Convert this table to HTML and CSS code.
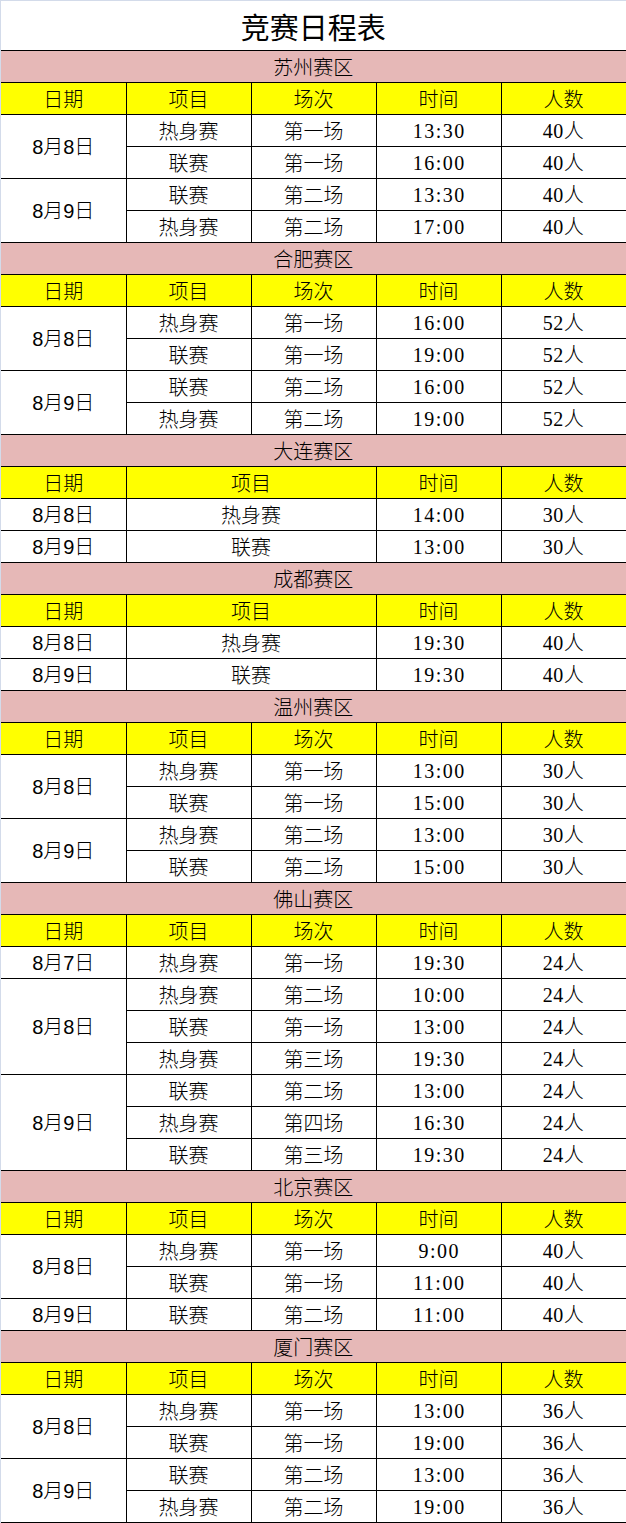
FILE: index.html
```html
<!DOCTYPE html>
<html lang="zh-CN">
<head>
<meta charset="utf-8">
<title>竞赛日程表</title>
<link rel="stylesheet" href="styles.css">
</head>
<body>
<div class="sheet">
<table class="schedule">
<colgroup><col class="c"><col class="c"><col class="c"><col class="c"><col class="c"></colgroup>
<tbody>
<tr><td class="title" colspan="5">竞赛日程表</td></tr>

<tr><td class="zone" colspan="5">苏州赛区</td></tr>
<tr class="head"><td>日期</td><td>项目</td><td>场次</td><td>时间</td><td>人数</td></tr>
<tr><td class="date" rowspan="2">8月8日</td><td>热身赛</td><td>第一场</td><td class="time">13:30</td><td class="num">40人</td></tr>
<tr><td>联赛</td><td>第一场</td><td class="time">16:00</td><td class="num">40人</td></tr>
<tr><td class="date" rowspan="2">8月9日</td><td>联赛</td><td>第二场</td><td class="time">13:30</td><td class="num">40人</td></tr>
<tr><td>热身赛</td><td>第二场</td><td class="time">17:00</td><td class="num">40人</td></tr>

<tr><td class="zone" colspan="5">合肥赛区</td></tr>
<tr class="head"><td>日期</td><td>项目</td><td>场次</td><td>时间</td><td>人数</td></tr>
<tr><td class="date" rowspan="2">8月8日</td><td>热身赛</td><td>第一场</td><td class="time">16:00</td><td class="num">52人</td></tr>
<tr><td>联赛</td><td>第一场</td><td class="time">19:00</td><td class="num">52人</td></tr>
<tr><td class="date" rowspan="2">8月9日</td><td>联赛</td><td>第二场</td><td class="time">16:00</td><td class="num">52人</td></tr>
<tr><td>热身赛</td><td>第二场</td><td class="time">19:00</td><td class="num">52人</td></tr>

<tr><td class="zone" colspan="5">大连赛区</td></tr>
<tr class="head"><td>日期</td><td colspan="2">项目</td><td>时间</td><td>人数</td></tr>
<tr><td class="date">8月8日</td><td colspan="2">热身赛</td><td class="time">14:00</td><td class="num">30人</td></tr>
<tr><td class="date">8月9日</td><td colspan="2">联赛</td><td class="time">13:00</td><td class="num">30人</td></tr>

<tr><td class="zone" colspan="5">成都赛区</td></tr>
<tr class="head"><td>日期</td><td colspan="2">项目</td><td>时间</td><td>人数</td></tr>
<tr><td class="date">8月8日</td><td colspan="2">热身赛</td><td class="time">19:30</td><td class="num">40人</td></tr>
<tr><td class="date">8月9日</td><td colspan="2">联赛</td><td class="time">19:30</td><td class="num">40人</td></tr>

<tr><td class="zone" colspan="5">温州赛区</td></tr>
<tr class="head"><td>日期</td><td>项目</td><td>场次</td><td>时间</td><td>人数</td></tr>
<tr><td class="date" rowspan="2">8月8日</td><td>热身赛</td><td>第一场</td><td class="time">13:00</td><td class="num">30人</td></tr>
<tr><td>联赛</td><td>第一场</td><td class="time">15:00</td><td class="num">30人</td></tr>
<tr><td class="date" rowspan="2">8月9日</td><td>热身赛</td><td>第二场</td><td class="time">13:00</td><td class="num">30人</td></tr>
<tr><td>联赛</td><td>第二场</td><td class="time">15:00</td><td class="num">30人</td></tr>

<tr><td class="zone" colspan="5">佛山赛区</td></tr>
<tr class="head"><td>日期</td><td>项目</td><td>场次</td><td>时间</td><td>人数</td></tr>
<tr><td class="date">8月7日</td><td>热身赛</td><td>第一场</td><td class="time">19:30</td><td class="num">24人</td></tr>
<tr><td class="date" rowspan="3">8月8日</td><td>热身赛</td><td>第二场</td><td class="time">10:00</td><td class="num">24人</td></tr>
<tr><td>联赛</td><td>第一场</td><td class="time">13:00</td><td class="num">24人</td></tr>
<tr><td>热身赛</td><td>第三场</td><td class="time">19:30</td><td class="num">24人</td></tr>
<tr><td class="date" rowspan="3">8月9日</td><td>联赛</td><td>第二场</td><td class="time">13:00</td><td class="num">24人</td></tr>
<tr><td>热身赛</td><td>第四场</td><td class="time">16:30</td><td class="num">24人</td></tr>
<tr><td>联赛</td><td>第三场</td><td class="time">19:30</td><td class="num">24人</td></tr>

<tr><td class="zone" colspan="5">北京赛区</td></tr>
<tr class="head"><td>日期</td><td>项目</td><td>场次</td><td>时间</td><td>人数</td></tr>
<tr><td class="date" rowspan="2">8月8日</td><td>热身赛</td><td>第一场</td><td class="time">9:00</td><td class="num">40人</td></tr>
<tr><td>联赛</td><td>第一场</td><td class="time">11:00</td><td class="num">40人</td></tr>
<tr><td class="date">8月9日</td><td>联赛</td><td>第二场</td><td class="time">11:00</td><td class="num">40人</td></tr>

<tr><td class="zone" colspan="5">厦门赛区</td></tr>
<tr class="head"><td>日期</td><td>项目</td><td>场次</td><td>时间</td><td>人数</td></tr>
<tr><td class="date" rowspan="2">8月8日</td><td>热身赛</td><td>第一场</td><td class="time">13:00</td><td class="num">36人</td></tr>
<tr><td>联赛</td><td>第一场</td><td class="time">19:00</td><td class="num">36人</td></tr>
<tr><td class="date" rowspan="2">8月9日</td><td>联赛</td><td>第二场</td><td class="time">13:00</td><td class="num">36人</td></tr>
<tr><td>热身赛</td><td>第二场</td><td class="time">19:00</td><td class="num">36人</td></tr>
</tbody>
</table>
</div>
</body>
</html>
```

FILE: styles.css
```css
html, body {
  margin: 0;
  padding: 0;
  background: #d3dbea;
}

.sheet {
  margin: 1px 0 0 1px;
  width: 625px;
  background: #ffffff;
}

.schedule {
  border-collapse: collapse;
  table-layout: fixed;
  width: 625px;
  font-family: "Noto Sans CJK SC", sans-serif;
  font-size: 20px;
  font-weight: 300;
  color: #000;
}

.schedule .c {
  width: 125px;
}

.schedule td {
  border: 1px solid #000;
  height: 31px;
  padding: 0;
  text-align: center;
  vertical-align: middle;
  line-height: 30px;
  white-space: nowrap;
}

.schedule tr > td:first-child {
  border-left: none;
}

.schedule td.title {
  border-top: none;
  height: 49px;
  font-size: 29px;
  font-weight: 400;
  line-height: 48px;
  background: #fff;
}

.schedule td.zone {
  background: #e6b8b7;
}

.schedule tr.head td {
  background: #ffff00;
}

.schedule td.time {
  font-family: "Liberation Serif", "Noto Sans CJK SC", serif;
  letter-spacing: 1.5px;
  text-indent: 1.5px;
}

.schedule td.num {
  font-family: "Liberation Serif", "Noto Sans CJK SC", serif;
  letter-spacing: 0.5px;
}

.schedule td.date {
  font-family: "Liberation Sans", "Noto Sans CJK SC", sans-serif;
}
```
